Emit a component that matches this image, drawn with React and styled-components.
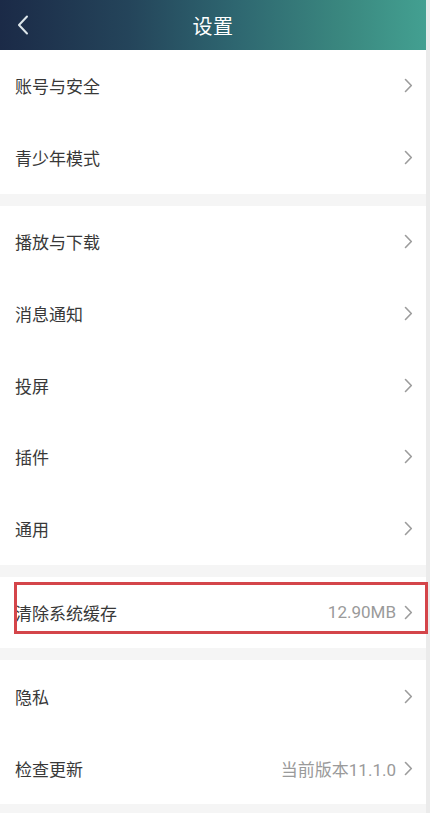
import React from 'react';
import styled, { createGlobalStyle } from 'styled-components';

const Global = createGlobalStyle`
  html, body { margin: 0; padding: 0; background: #f5f5f5; }
  body { font-family: Roboto, "Noto Sans CJK SC", "Noto Sans", sans-serif; -webkit-font-smoothing: antialiased; }
  * { box-sizing: border-box; }
`;

const Page = styled.div`
  display: flex;
  width: 430px;
  height: 813px;
  overflow: hidden;
  background: #f5f5f5;
`;

const Main = styled.div`
  flex: 1;
  display: flex;
  flex-direction: column;
  min-width: 0;
`;

const ScrollStrip = styled.div`
  width: 4px;
  flex-shrink: 0;
  background: #ebebeb;
`;

const Header = styled.header`
  flex-shrink: 0;
  height: 50px;
  display: flex;
  align-items: center;
  justify-content: center;
  position: relative;
  background: linear-gradient(90deg, #1b2a47 0%, #24445a 30%, #2e6670 55%, #3a877f 80%, #43a091 100%);
`;

const BackButton = styled.button`
  position: absolute;
  left: 14px;
  top: 14px;
  width: 18px;
  height: 22px;
  padding: 0;
  border: 0;
  background: none;
  display: flex;
  align-items: center;
  justify-content: center;
`;

const Title = styled.h1`
  margin: 0;
  font-size: 20px;
  font-weight: 400;
  color: #ffffff;
  letter-spacing: 0.5px;
`;

const Group = styled.section`
  flex-shrink: 0;
  background: #ffffff;
  margin-bottom: 12px;
  display: flex;
  flex-direction: column;
`;

const Row = styled.div`
  position: relative;
  flex-shrink: 0;
  height: 71.8px;
  display: flex;
  align-items: center;
  justify-content: space-between;
  padding: 0 13px 0 15px;
`;

const Label = styled.span`
  font-size: 17px;
  color: #383838;
`;

const Right = styled.div`
  display: flex;
  align-items: center;
  gap: 8px;
`;

const Value = styled.span`
  font-size: 17px;
  color: #9a9a9a;
`;

const Highlight = styled.div`
  position: absolute;
  left: 14px;
  right: -2px;
  top: 5px;
  height: 52px;
  border: 3px solid #d4454a;
  pointer-events: none;
`;

const Chevron = () => (
  <svg width="9" height="15" viewBox="0 0 9 15" fill="none">
    <path d="M1.5 1.5 L7.3 7.5 L1.5 13.5" stroke="#9c9c9c" strokeWidth="1.6" strokeLinecap="round" strokeLinejoin="round" />
  </svg>
);

const BackIcon = () => (
  <svg width="12" height="20" viewBox="0 0 12 20" fill="none">
    <path d="M10 1.5 L2 10 L10 18.5" stroke="#dde6ea" strokeWidth="2" strokeLinecap="round" strokeLinejoin="round" />
  </svg>
);

const groups = [
  [{ label: '账号与安全' }, { label: '青少年模式' }],
  [
    { label: '播放与下载' },
    { label: '消息通知' },
    { label: '投屏' },
    { label: '插件' },
    { label: '通用' },
  ],
  [{ label: '清除系统缓存', value: '12.90MB', highlight: true }],
  [{ label: '隐私' }, { label: '检查更新', value: '当前版本11.1.0' }],
];

export default function App() {
  return (
    <>
      <Global />
      <Page>
        <Main>
          <Header>
            <BackButton aria-label="返回">
              <BackIcon />
            </BackButton>
            <Title>设置</Title>
          </Header>
          {groups.map((items, gi) => (
            <Group key={gi}>
              {items.map((item) => (
                <Row key={item.label}>
                  <Label>{item.label}</Label>
                  <Right>
                    {item.value && <Value>{item.value}</Value>}
                    <Chevron />
                  </Right>
                  {item.highlight && <Highlight />}
                </Row>
              ))}
            </Group>
          ))}
        </Main>
        <ScrollStrip />
      </Page>
    </>
  );
}
